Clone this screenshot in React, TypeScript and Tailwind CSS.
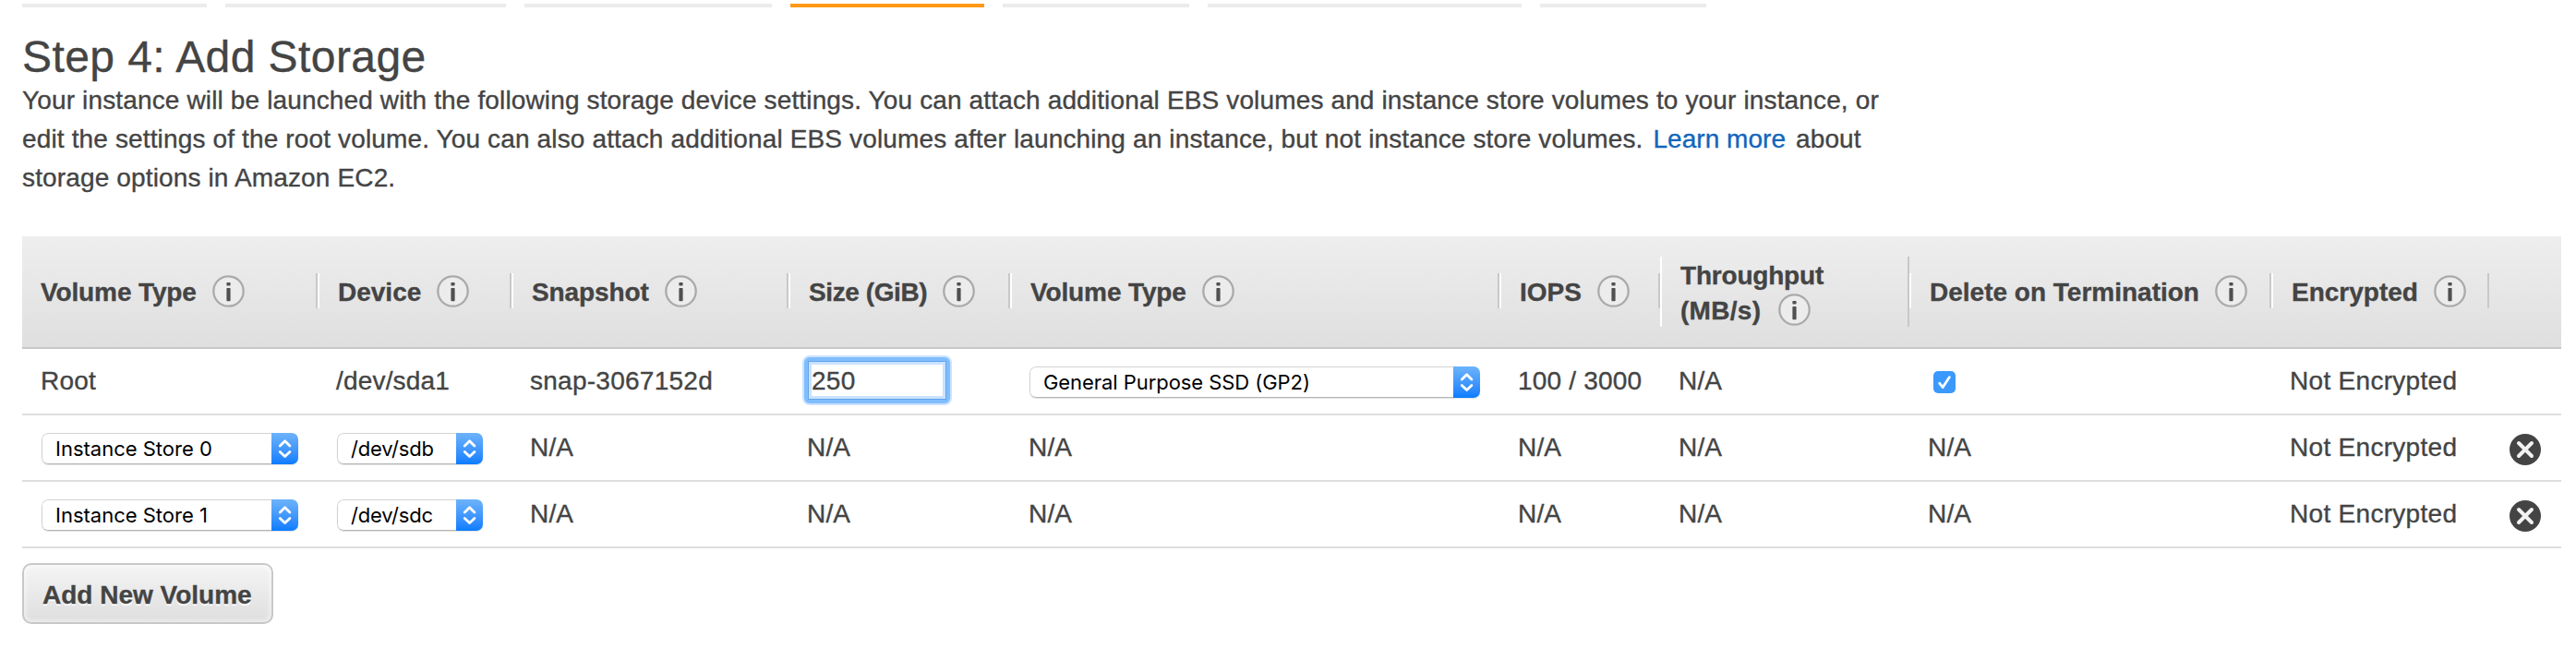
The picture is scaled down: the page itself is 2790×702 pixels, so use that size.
import React from "react";

const GRID =
  "grid grid-cols-[320px_210px_300px_240px_530px_174px_270px_392px_236px_78px]";

const CELL = "pt-[14px] pl-5 leading-[42px] tracking-[0.18px] whitespace-nowrap";

function StepTabs() {
  const steps = ["w-50", "w-76", "w-67", "w-[210px]", "w-[202px]", "w-85", "w-45"];
  return (
    <nav className="flex gap-5 pt-1 pl-6">
      {steps.map((width, i) => (
        <div
          key={i}
          className={`h-1 shrink-0 ${width} ${i === 3 ? "bg-[#ff9914]" : "bg-[#ebebeb]"}`}
        />
      ))}
    </nav>
  );
}

function InfoIcon() {
  return (
    <svg className="mt-[1.5px] ml-[17px] size-[35px] shrink-0" viewBox="0 0 35 35">
      <circle cx="17.5" cy="17.5" r="16.2" fill="#ececec" stroke="#aaaaaa" strokeWidth="2.3" />
      <rect x="15.4" y="8" width="4.2" height="3.6" rx="0.8" fill="#505050" />
      <rect x="15.4" y="14" width="4.2" height="14.2" rx="0.8" fill="#505050" />
    </svg>
  );
}

type HeadProps = {
  children: React.ReactNode;
  tracking?: string;
  first?: boolean;
};

function Head({ children, tracking = "", first = false }: HeadProps) {
  return (
    <div
      className={`mt-10 flex h-[38px] border-r-2 border-r-[#c8c8c8] pl-5 ${
        first ? "" : "border-l-2 border-l-white"
      }`}
    >
      <span className={`pt-0.5 leading-[38px] whitespace-nowrap ${tracking}`}>{children}</span>
      <InfoIcon />
    </div>
  );
}

function ThroughputHead() {
  return (
    <div className="mt-[22px] h-[76px] border-r-2 border-l-2 border-r-[#c8c8c8] border-l-white pl-5">
      <div className="h-[38px] pt-0.5 leading-[38px] tracking-[-0.2px]">Throughput</div>
      <div className="flex h-[38px]">
        <span className="pt-0.5 pr-0.5 leading-[38px] tracking-[0.3px]">(MB/s)</span>
        <InfoIcon />
      </div>
    </div>
  );
}

function Select({ label, width, tracking = "" }: { label: string; width: string; tracking?: string }) {
  return (
    <div
      className={`mt-[19px] ml-[21px] flex h-[34px] overflow-hidden rounded-[7px] bg-white shadow-[0_1px_1px_rgba(0,0,0,0.12)] ${width}`}
    >
      <div className="flex-1 rounded-l-[7px] border border-r-0 border-[#d2d2d2] border-b-[#b4b4b4]">
        <div
          className={`h-8 pl-3.5 font-[Inter,sans-serif] text-[22px] leading-8 whitespace-nowrap text-black [-webkit-text-stroke:0px] ${tracking}`}
        >
          {label}
        </div>
      </div>
      <div className="w-[29px] bg-linear-to-b from-[#6cb3fa] to-[#077cff]">
        <svg
          className="h-[34px] w-[29px]"
          viewBox="0 0 29 34"
          fill="none"
          stroke="white"
          strokeWidth="2.8"
          strokeLinecap="round"
          strokeLinejoin="round"
        >
          <path d="M9.3 14 L14.6 8.8 L19.9 14" />
          <path d="M9.3 20.4 L14.6 25.6 L19.9 20.4" />
        </svg>
      </div>
    </div>
  );
}

function SizeField() {
  return (
    <div className="mt-[7px] ml-[15px] h-[54px] w-[162px] rounded-lg bg-[#cbe3ff] p-0.5">
      <div className="h-[50px] w-[158px] rounded-md bg-[#80bdff] p-1">
        <div className="h-[42px] w-[150px] border border-[#62a4ea] bg-[#c9e2ff] p-[3px]">
          <div className="h-[34px] bg-white leading-[34px] tracking-[0.3px]">
            <span className="block pt-px">250</span>
          </div>
        </div>
      </div>
    </div>
  );
}

function Checkbox() {
  return (
    <svg className="mt-6 ml-[26px] size-6" viewBox="0 0 24 24">
      <rect width="24" height="24" rx="5" fill="#3b99fc" />
      <path
        d="M6.6 13.2 L10.2 17.6 L17.4 6.6"
        fill="none"
        stroke="white"
        strokeWidth="2.7"
        strokeLinecap="round"
        strokeLinejoin="round"
      />
    </svg>
  );
}

function RemoveIcon() {
  return (
    <svg className="mt-5 ml-[22px] size-[34px]" viewBox="0 0 34 34">
      <circle cx="17" cy="17" r="17" fill="#444" />
      <path
        d="M10 10 L24 24 M24 10 L10 24"
        stroke="#f2f2f2"
        strokeWidth="4"
        strokeLinecap="round"
      />
    </svg>
  );
}

function InstanceStoreRow({ store, device }: { store: string; device: string }) {
  return (
    <div className={`${GRID} h-18 border-b-2 border-[#dedede]`}>
      <Select label={store} width="w-[278px]" />
      <Select label={device} width="w-[158px]" tracking="tracking-[-0.2px]" />
      <div className={CELL}>N/A</div>
      <div className={CELL}>N/A</div>
      <div className={CELL}>N/A</div>
      <div className={CELL}>N/A</div>
      <div className={CELL}>N/A</div>
      <div className={CELL}>N/A</div>
      <div className={CELL}>
        <span className="tracking-[0.3px]">Not Encrypted</span>
      </div>
      <RemoveIcon />
    </div>
  );
}

export default function App() {
  return (
    <main className="h-[702px] w-[2790px] overflow-hidden bg-white font-['Liberation_Sans',Arial,sans-serif] text-[28px] text-[#444] [-webkit-text-stroke:0.35px_currentColor]">
      <StepTabs />

      <h1 className="mt-[27px] ml-6 text-[48px] leading-[53px] tracking-[0.42px]">
        Step 4: Add Storage
      </h1>
      <p className="ml-6 leading-[42px] tracking-[0.142px] whitespace-nowrap">
        Your instance will be launched with the following storage device settings. You can attach
        additional EBS volumes and instance store volumes to your instance, or
        <br />
        edit the settings of the root volume. You can also attach additional EBS volumes after
        launching an instance, but not instance store volumes.{" "}
        <a className="mx-[3px] tracking-[0.04px] text-[#1166bb]">Learn more</a> about
        <br />
        storage options in Amazon EC2.
      </p>

      <section className="mt-[42px] ml-6 w-[2750px]">
        <div
          className={`${GRID} h-[122px] border-b-2 border-[#c8c8c8] bg-linear-to-b from-[#eeeeee] to-[#dfdfdf] font-bold`}
        >
          <Head first tracking="tracking-[-0.12px]">Volume Type</Head>
          <Head>Device</Head>
          <Head tracking="tracking-[-0.1px]">Snapshot</Head>
          <Head tracking="tracking-[-0.4px]">Size (GiB)</Head>
          <Head tracking="tracking-[-0.12px]">Volume Type</Head>
          <Head>IOPS</Head>
          <ThroughputHead />
          <Head>Delete on Termination</Head>
          <Head>Encrypted</Head>
        </div>

        <div className={`${GRID} h-18 border-b-2 border-[#dedede]`}>
          <div className={CELL}>Root</div>
          <div className={CELL}>/dev/sda1</div>
          <div className={CELL}>
            <span className="tracking-[0.26px]">snap-3067152d</span>
          </div>
          <SizeField />
          <Select
            label="General Purpose SSD (GP2)"
            width="w-[488px]"
            tracking="tracking-[-0.06px]"
          />
          <div className={CELL}>100 / 3000</div>
          <div className={CELL}>N/A</div>
          <Checkbox />
          <div className={CELL}>
            <span className="tracking-[0.3px]">Not Encrypted</span>
          </div>
        </div>

        <InstanceStoreRow store="Instance Store 0" device="/dev/sdb" />
        <InstanceStoreRow store="Instance Store 1" device="/dev/sdc" />
      </section>

      <button className="mt-4 ml-6 block h-[66px] w-[272px] rounded-[10px] border-2 border-[#c8c8c8] bg-linear-to-b from-[#f5f5f5] to-[#dedede] pl-5 text-left font-bold whitespace-nowrap shadow-[inset_0_0_6px_rgba(255,255,255,0.9)] text-shadow-[0_2px_0_#ffffff]">
        <span className="block pt-[3px] leading-[60px]">Add New Volume</span>
      </button>
    </main>
  );
}
